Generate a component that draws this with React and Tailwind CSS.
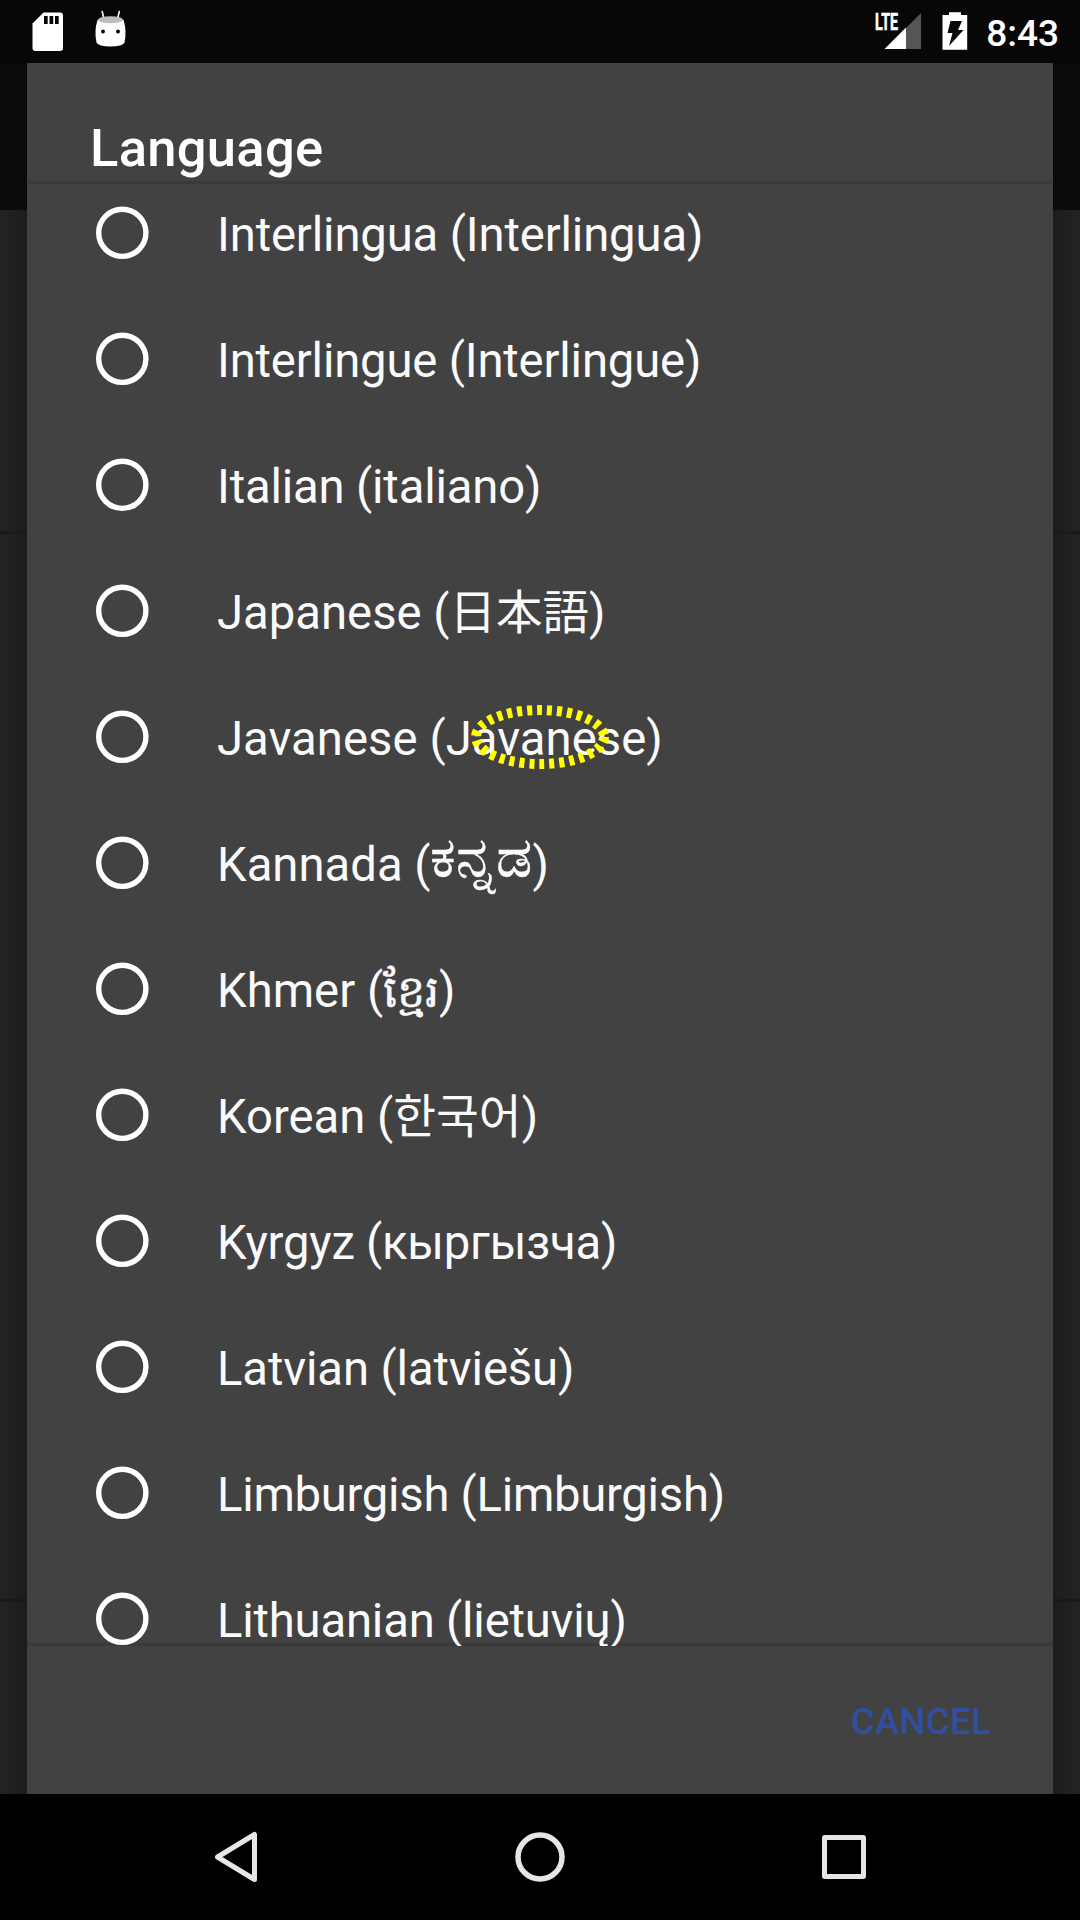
const languages = [
  { name: "Interlingua (", native: "Interlingua", row: "tracking-[-0.15px]" },
  { name: "Interlingue (", native: "Interlingue", row: "tracking-[-0.18px]" },
  { name: "Italian (", native: "italiano", row: "tracking-[-0.18px]" },
  { name: "Japanese (", native: "日本語", script: "text-[46.5px]" },
  { name: "Javanese (", native: "Javanese", row: "tracking-[0.05px]", marked: true },
  { name: "Kannada (", native: "ಕನ್ನಡ", script: "relative top-[-4px] text-[57px] leading-[0] [-webkit-text-stroke:0.5px_#fafafa]" },
  { name: "Khmer (", native: "ខ្មែរ", script: "text-[44.5px] leading-[0] [-webkit-text-stroke:0.4px_#fafafa]" },
  { name: "Korean (", native: "한국어", script: "text-[46.5px]" },
  { name: "Kyrgyz (", native: "кыргызча", row: "tracking-[-0.23px]" },
  { name: "Latvian (", native: "latviešu", row: "tracking-[-0.13px]" },
  { name: "Limburgish (", native: "Limburgish", row: "tracking-[-0.28px]" },
  { name: "Lithuanian (", native: "lietuvių", row: "tracking-[-0.2px]" },
];

function StatusBar() {
  return (
    <header className="h-[63px] bg-[#070707] flex items-start">
      <svg className="ml-8 mt-3 w-8 h-10" viewBox="0 0 32 40" fill="#fff">
        <path d="M11.5 .5H28Q31 .5 31 3.5V36Q31 39 28 39H3.500Q.5 39 .5 36V11.500Z" />
        <path fill="#070707" d="M12 4h3.700v8H12zM17.500 4h3.700v8h-3.700zM23 4h3.700v8H23z" />
      </svg>
      <svg className="ml-[30px] mt-[10px] w-9 h-[38px]" viewBox="0 0 36 38">
        <path d="M8.200 1.500L10 9M25.300 1.500L23.500 9" stroke="#fff" strokeWidth="1.600" strokeLinecap="round" />
        <path fill="#fff" d="M3.500 10Q16.500 4 29.500 10Q33 21 30.500 32.500Q28.500 36.500 16.500 36.500Q4.500 36.500 2.500 32.500Q0 21 3.500 10Z" />
        <ellipse cx="16.500" cy="9.700" rx="12.500" ry="3.500" fill="#bdbdbd" />
        <circle cx="9" cy="21.500" r="1.900" fill="#000" />
        <circle cx="24" cy="21.500" r="1.900" fill="#000" />
      </svg>
      <div className="flex-1" />
      <span className="mt-[13px] w-[24px] h-5 text-[23px] leading-5 font-bold text-white"><span className="inline-block origin-left scale-x-[0.62] [-webkit-text-stroke:0.6px_#fff]">LTE</span></span>
      <svg className="-ml-[15px] mt-3 w-[38px] h-[38px]" viewBox="0 0 38 38">
        <path fill="#555" d="M37 1V37H22V16Z" />
        <path fill="#fff" d="M22 15.500V37H.5Z" />
      </svg>
      <svg className="ml-5 mt-3 w-[26px] h-[38px]" viewBox="0 0 26 38">
        <path fill="#fff" d="M7 .3H19V3H25.200V37.800H.5V3H7Z" />
        <path fill="#070707" d="M8.500 9H20L16 18H21.500L7 34L10.500 21H5.500Z" />
      </svg>
      <time className="ml-[18px] mr-[21px] mt-[13px] text-[37px] leading-[42px] font-medium text-white">8:43</time>
    </header>
  );
}

function Option({ name, native, row = "", script = "", marked }) {
  return (
    <li className="h-[126px] shrink-0 pl-[68px] flex items-center">
      <svg className="size-[54px] mb-[4px]" viewBox="0 0 54 54">
        <circle cx="27.300" cy="26.800" r="23.600" fill="none" stroke="#fff" strokeWidth="5.400" />
      </svg>
      <span className={`ml-[68px] h-14 leading-[56px] text-[47.25px] text-[#fafafa] whitespace-nowrap ${row}`}>
        {name}
        <span className="relative">
          <span className={script}>{native}</span>
          {marked && (
            <svg className="absolute left-[25px] top-[-6px] w-[138px] h-[64px]" viewBox="0 0 138 64">
              <ellipse cx="69" cy="32" rx="64" ry="27" fill="none" stroke="#ff0" strokeWidth="10" strokeDasharray="5 5" />
            </svg>
          )}
        </span>
        )
      </span>
    </li>
  );
}

function Backdrop({ side }) {
  return (
    <div className="w-[27px] flex flex-col">
      <div className="h-[147px] bg-[#0b0b0b]" />
      <div className={`h-[321px] from-[#232323] to-[#1c1c1c] ${side}`} />
      <div className="h-[3px] bg-[#191919]" />
      <div className={`h-[1065px] from-[#232323] to-[#1c1c1c] ${side}`} />
      <div className="h-[3px] bg-[#191919]" />
      <div className={`flex-1 from-[#232323] to-[#1c1c1c] ${side}`} />
    </div>
  );
}

function NavBar() {
  return (
    <nav className="h-[126px] flex items-center">
      <svg className="ml-[213px] w-[46px] h-[54px]" viewBox="0 0 46 54">
        <path d="M41.500 4.500V49.500L4.500 27Z" fill="none" stroke="#e6e6e6" strokeWidth="5" strokeLinejoin="round" />
      </svg>
      <svg className="ml-[256px] size-[50px]" viewBox="0 0 50 50">
        <circle cx="25" cy="25" r="22" fill="none" stroke="#e6e6e6" strokeWidth="5.500" />
      </svg>
      <span className="ml-[257px] size-[44px] rounded-[3px] border-[5px] border-[#e6e6e6]" />
    </nav>
  );
}

export default function App() {
  return (
    <div className="w-[1080px] h-[1920px] overflow-hidden bg-black flex flex-col font-[Roboto,'Noto_Sans_CJK_JP','Noto_Sans_CJK_KR',sans-serif]">
      <StatusBar />
      <main className="h-[1731px] flex">
        <Backdrop side="bg-linear-to-r" />
        <section className="w-[1026px] bg-[#424242] flex flex-col">
          <h1 className="h-[118px] shrink-0 pl-[63px] pt-[50px] text-[52.5px] tracking-[0.3px] leading-[70px] font-medium text-white">Language</h1>
          <div className="h-[3px] shrink-0 bg-[#3a3a3a]" />
          <ul className="relative z-10 h-[1474px] shrink-0 overflow-hidden flex flex-col -mt-[12px]">
            {languages.map((l) => <Option key={l.name} {...l} />)}
          </ul>
          <div className="h-[3px] shrink-0 bg-[#3a3a3a] -mt-[3px]" />
          <button className="self-end mr-[62px] mt-[54px] text-[36.75px] leading-[44px] tracking-[0.2px] font-medium text-[#304f9e]">CANCEL</button>
        </section>
        <Backdrop side="bg-linear-to-l" />
      </main>
      <NavBar />
    </div>
  );
}
